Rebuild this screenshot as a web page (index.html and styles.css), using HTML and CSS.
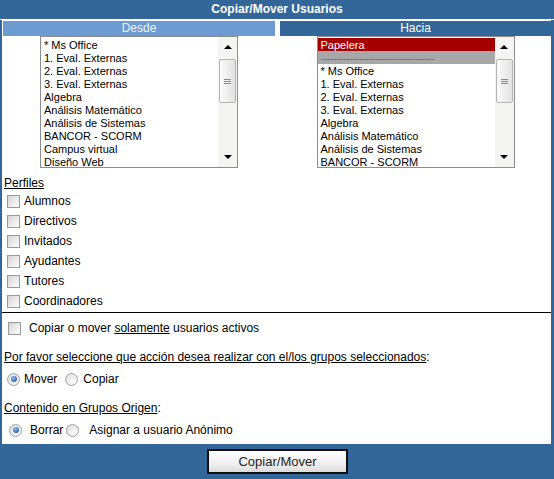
FILE: index.html
```
<!DOCTYPE html>
<html>
<head>
<meta charset="utf-8">
<link rel="stylesheet" href="styles.css">
</head>
<body>
<div class="frame">
  <div class="title">Copiar/Mover Usuarios</div>
  <div class="body">
    <div class="cols">
      <div class="col">
        <div class="head desde">Desde</div>
        <div class="listbox">
          <div class="items">
            <div class="item">* Ms Office</div>
            <div class="item">1. Eval. Externas</div>
            <div class="item">2. Eval. Externas</div>
            <div class="item">3. Eval. Externas</div>
            <div class="item">Algebra</div>
            <div class="item">Análisis Matemático</div>
            <div class="item">Análisis de Sistemas</div>
            <div class="item">BANCOR - SCORM</div>
            <div class="item">Campus virtual</div>
            <div class="item">Diseño Web</div>
          </div>
          <div class="scroll">
            <div class="arrow"><span class="tri-up"></span></div>
            <div class="thumb"><span class="grip"></span><span class="grip"></span><span class="grip"></span></div>
            <div class="spacer"></div>
            <div class="arrow"><span class="tri-down"></span></div>
          </div>
        </div>
      </div>
      <div class="col">
        <div class="head hacia">Hacia</div>
        <div class="listbox">
          <div class="items hacia-items">
            <div class="item sel">Papelera</div>
            <div class="item sep">------------------------------------</div>
            <div class="item">* Ms Office</div>
            <div class="item">1. Eval. Externas</div>
            <div class="item">2. Eval. Externas</div>
            <div class="item">3. Eval. Externas</div>
            <div class="item">Algebra</div>
            <div class="item">Análisis Matemático</div>
            <div class="item">Análisis de Sistemas</div>
            <div class="item">BANCOR - SCORM</div>
          </div>
          <div class="scroll">
            <div class="arrow"><span class="tri-up"></span></div>
            <div class="thumb"><span class="grip"></span><span class="grip"></span><span class="grip"></span></div>
            <div class="spacer"></div>
            <div class="arrow"><span class="tri-down"></span></div>
          </div>
        </div>
      </div>
    </div>

    <div class="label perfiles"><u>Perfiles</u></div>
    <div class="row cb-row"><span class="cb"></span><span>Alumnos</span></div>
    <div class="row cb-row"><span class="cb"></span><span>Directivos</span></div>
    <div class="row cb-row"><span class="cb"></span><span>Invitados</span></div>
    <div class="row cb-row"><span class="cb"></span><span>Ayudantes</span></div>
    <div class="row cb-row"><span class="cb"></span><span>Tutores</span></div>
    <div class="row cb-row"><span class="cb"></span><span>Coordinadores</span></div>

    <div class="rule"></div>

    <div class="row activos"><span class="cb"></span><span>Copiar o mover <u>solamente</u> usuarios activos</span></div>

    <div class="label question"><u>Por favor seleccione que acción desea realizar con el/los grupos seleccionados</u>:</div>
    <div class="row radios r1">
      <span class="rd on"></span><span class="rl">Mover</span>
      <span class="rd"></span><span class="rl">Copiar</span>
    </div>

    <div class="label question"><u>Contenido en Grupos Origen</u>:</div>
    <div class="row radios r2">
      <span class="rd on"></span><span class="rl">Borrar</span>
      <span class="rd"></span><span class="rl">Asignar a usuario Anónimo</span>
    </div>
  </div>
  <div class="footer">
    <button class="btn" type="button">Copiar/Mover</button>
  </div>
</div>
</body>
</html>
```
FILE: styles.css
```
* { box-sizing: border-box; }
body {
  margin: 0;
  font-family: "Liberation Sans", Arial, sans-serif;
  font-size: 12px;
  color: #000;
}
.frame {
  width: 554px;
  height: 479px;
  background: #336699;
  display: flex;
  flex-direction: column;
}
.title {
  height: 20px;
  line-height: 19px;
  border-bottom: 1px solid #fff;
  text-align: center;
  color: #fff;
  font-weight: bold;
  font-size: 12px;
}
.body {
  flex: 1;
  background: #fff;
  border-left: 2px solid #336699;
  border-right: 3px solid #336699;
  padding: 1px 0 0 1px;
  display: flex;
  flex-direction: column;
}
.cols {
  display: grid;
  grid-template-columns: 272px 271px;
  column-gap: 5px;
}
.head {
  height: 15px;
  line-height: 15px;
  text-align: center;
  color: #fff;
  font-size: 12px;
}
.desde { background: #6b9bd1; color: #eef4ff; }
.hacia { background: #336699; }
.listbox {
  width: 198px;
  height: 132px;
  margin: 0 auto;
  border: 1px solid #8a8d91;
  display: flex;
  background: #fff;
}
.items {
  flex: 1;
  overflow: hidden;
  min-width: 0;
  padding-top: 2px;
}
.hacia-items { padding-top: 1px; }
.item {
  height: 13px;
  line-height: 13px;
  font-size: 11px;
  padding-left: 3px;
  white-space: nowrap;
  overflow: hidden;
}
.hacia-items .item { line-height: 14px; }
.item.sel { background: #a50000; color: #fff; }
.item.sep { background: #a8a8a8; color: #6f6f6f; letter-spacing: -0.5px; }
.scroll {
  width: 19px;
  background: #f4f4f2;
  display: flex;
  flex-direction: column;
  align-items: center;
}
.arrow {
  height: 20px;
  width: 100%;
  display: flex;
  align-items: center;
  justify-content: center;
}
.tri-up {
  width: 0; height: 0;
  border-left: 4px solid transparent;
  border-right: 4px solid transparent;
  border-bottom: 4px solid #000;
}
.tri-down {
  width: 0; height: 0;
  border-left: 4px solid transparent;
  border-right: 4px solid transparent;
  border-top: 4px solid #000;
}
.thumb {
  margin-top: 2px;
  width: 17px;
  height: 44px;
  border: 1px solid #b4b4b4;
  border-radius: 2px;
  background: linear-gradient(to right, #fbfbfb, #e2e2e2);
  display: flex;
  flex-direction: column;
  align-items: center;
  justify-content: center;
  gap: 1px;
}
.grip {
  display: block;
  width: 7px;
  height: 1px;
  background: #8a8a8a;
}
.spacer { flex: 1; }

.label {
  height: 15px;
  line-height: 15px;
  padding-left: 1px;
}
.perfiles { margin-top: 8px; }
.row {
  height: 20px;
  display: flex;
  align-items: center;
}
.cb {
  width: 13px;
  height: 13px;
  border: 1px solid #9a9a9a;
  background: linear-gradient(135deg, #d6d6d6, #fdfdfd);
  flex: none;
}
.cb-row .cb { margin: 0 4px 0 4px; }
.rule {
  margin-top: 1px;
  border-top: 1px solid #000;
  margin-left: -1px;
}
.activos { margin-top: 5px; }
.activos .cb { margin: 0 8px 0 5px; }
.question { margin-top: 12px; }
.radios { margin-top: 4px; }
.rd {
  width: 13px;
  height: 13px;
  border-radius: 50%;
  border: 1px solid #a3a3a3;
  background: radial-gradient(circle at 65% 65%, #fdfdfd 0, #e4e4e4 70%, #d0d0d0 100%);
  flex: none;
  display: flex;
  align-items: center;
  justify-content: center;
}
.rd.on::after {
  content: "";
  width: 6px;
  height: 6px;
  border-radius: 50%;
  background: radial-gradient(circle at 40% 35%, #8fc0f5 0, #2b63b5 70%, #1b4a92 100%);
}
.r1 .rd:first-child { margin-left: 4px; }
.r1 .rl:nth-child(2) { margin-left: 4px; margin-right: 8px; }
.r1 .rl:nth-child(4) { margin-left: 5px; }
.r2 .rd:first-child { margin-left: 6px; }
.r2 .rl:nth-child(2) { margin-left: 8px; margin-right: 3px; }
.r2 .rl:nth-child(4) { margin-left: 10px; }

.footer {
  height: 35px;
  display: flex;
  align-items: center;
  justify-content: center;
}
.btn {
  width: 141px;
  height: 25px;
  border: 2px solid #111;
  background: linear-gradient(to bottom, #ffffff, #ececec 70%, #dcdcdc);
  font-family: "Liberation Sans", Arial, sans-serif;
  font-size: 13px;
  color: #222;
  padding: 0;
  margin-left: 1px;
}
```
